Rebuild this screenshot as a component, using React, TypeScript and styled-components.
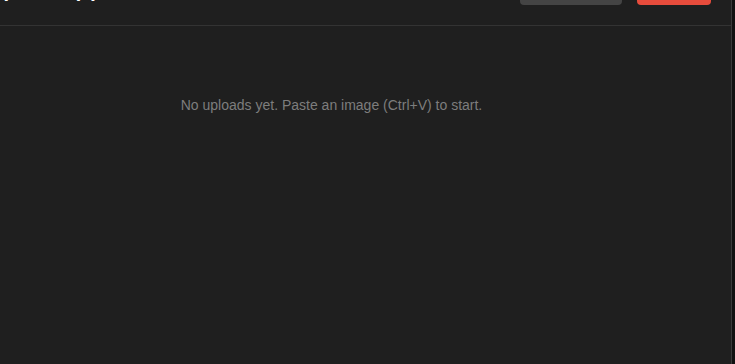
import React from "react";
import styled, { createGlobalStyle } from "styled-components";

const Global = createGlobalStyle`
  html, body { margin: 0; padding: 0; background: #111111; overflow: hidden; }
  body { font-family: "Liberation Sans", Arial, sans-serif; }
`;

const Panel = styled.section`
  box-sizing: border-box;
  width: 800px;
  min-height: 420px;
  margin: -26px 0 0 -68px;
  background: #1f1f1f;
  border-right: 1px solid #3a3a3a;
`;

const Header = styled.header`
  display: flex;
  align-items: center;
  justify-content: space-between;
  padding: 0 20px 20px 57px;
  border-bottom: 1px solid #333333;
`;

const Title = styled.h1`
  margin: 0;
  font-size: 20px;
  line-height: 24px;
  font-weight: 700;
  color: #ffffff;
`;

const Actions = styled.div`
  display: flex;
  gap: 15px;
`;

const Button = styled.button<{ $variant: "neutral" | "danger" }>`
  height: 31px;
  border: none;
  border-radius: 4px;
  padding: 0;
  width: ${(p) => (p.$variant === "danger" ? "74px" : "102px")};
  background: ${(p) => (p.$variant === "danger" ? "#e74c3c" : "#444444")};
  color: #ffffff;
  font-family: inherit;
  font-size: 13px;
  line-height: 14px;
  align-self: flex-end;
  display: flex;
  align-items: flex-start;
  justify-content: center;
  padding-top: 2px;
  overflow: hidden;
`;

const Body = styled.div`
  padding: 71px 20px 40px;
  text-align: center;
`;

const Empty = styled.p`
  margin: 0;
  font-size: 14px;
  line-height: 16px;
  color: #7d7d7d;
`;

export default function App() {
  return (
    <>
      <Global />
      <Panel>
        <Header>
          <Title>Uploads (0)</Title>
          <Actions>
            <Button $variant="neutral">Copy All</Button>
            <Button $variant="danger">Clear</Button>
          </Actions>
        </Header>
        <Body>
          <Empty>No uploads yet. Paste an image (Ctrl+V) to start.</Empty>
        </Body>
      </Panel>
    </>
  );
}
